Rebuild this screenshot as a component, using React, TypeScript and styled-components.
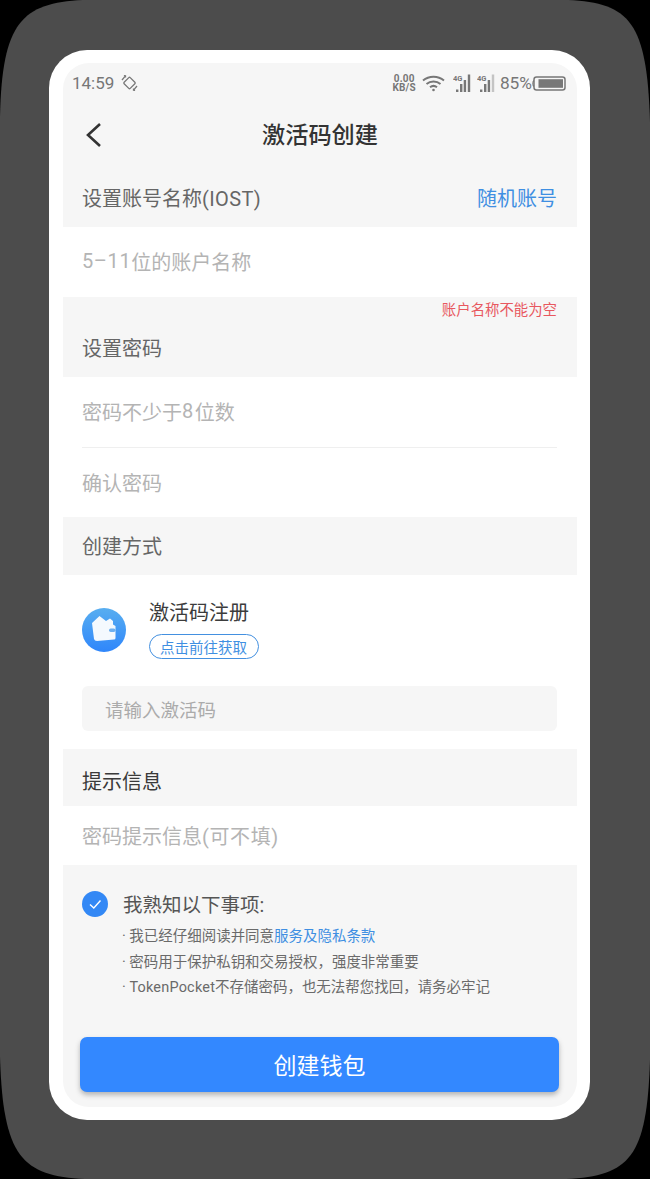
import React from 'react';
import styled, {createGlobalStyle} from "styled-components";

const GlobalStyle = createGlobalStyle`
  html, body {
    margin: 0;
    padding: 0;
    background: #000;
  }
  body {
    font-family: Roboto, "Noto Sans CJK SC", sans-serif;
  }
`

const Backdrop = styled.div`
  box-sizing: border-box;
  width: 650px;
  height: 1179px;
  padding: 50px 60px 59px 49px;
  background: #4c4c4c;
  clip-path: path("M83 0 L568 0 C630 3 647 22 650 122 L650 1060 C647 1157 630 1176 566 1179 L85 1179 C22 1176 3 1157 0 1057 L0 117 C2 22 22 3 83 0 Z");
`

const Phone = styled.div`
  box-sizing: border-box;
  height: 1070px;
  padding: 13px 13px 13px 14px;
  background: #fff;
  border-radius: 38px;
`

const Screen = styled.div`
  height: 1044px;
  display: flex;
  flex-direction: column;
  background: #f6f6f6;
  border-radius: 26px;
  overflow: hidden;
`

const StatusBar = styled.div`
  height: 40px;
  padding: 0 11px 0 9px;
  display: flex;
  align-items: center;
  justify-content: space-between;
  color: #777;
`

const StatusGroup = styled.div`
  display: flex;
  align-items: center;
  height: 20px;
`

const Clock = styled.span`
  font-size: 17px;
  margin-right: 7px;
`

const NetSpeed = styled.span`
  display: flex;
  flex-direction: column;
  align-items: center;
  font-size: 10px;
  font-weight: 700;
  line-height: 9px;
  letter-spacing: 0.2px;
  margin-right: 6px;
`

const BatteryText = styled.span`
  font-size: 17.3px;
  margin-left: 5px;
`

const NavBar = styled.div`
  box-sizing: border-box;
  height: 67px;
  padding: 0 0 7px 22px;
  display: flex;
  align-items: center;
  position: relative;
`

const NavTitle = styled.h1`
  position: absolute;
  left: 0;
  right: 0;
  margin: 0;
  text-align: center;
  font-size: 23.2px;
  font-weight: 500;
  color: #333;
`

const BackButton = styled.span`
  display: flex;
  margin-top: 4px;
`

const SectionHeader = styled.div<{$height: number; $shift: number; $dark?: boolean}>`
  box-sizing: border-box;
  height: ${p => p.$height}px;
  padding: ${p => Math.max(p.$shift, 0) * 2}px 20px ${p => Math.max(-p.$shift, 0) * 2}px 19px;
  display: flex;
  align-items: center;
  justify-content: space-between;
  font-size: 20px;
  color: ${p => p.$dark ? "#3a3a3a" : "#666"};
`

const RandomLink = styled.span`
  color: #3f8fe2;
`

const Spaced = styled.span<{$gap: number}>`
  letter-spacing: ${p => p.$gap}px;
`

const ErrorHeader = styled.div`
  height: 80px;
  padding: 0 20px 0 19px;
  display: flex;
  flex-direction: column;
  font-size: 20px;
  color: #666;
`

const ErrorText = styled.div`
  align-self: flex-end;
  height: 28px;
  line-height: 27px;
  font-size: 14.4px;
  color: #e8585f;
`

const HeaderLabel = styled.div`
  line-height: 48px;
`

const WhitePanel = styled.div`
  background: #fff;
`

const Field = styled.div<{$height: number; $divider?: boolean; $lift?: boolean}>`
  box-sizing: border-box;
  height: ${p => p.$height}px;
  margin: 0 20px 0 19px;
  padding-bottom: ${p => p.$lift ? 2 : 0}px;
  display: flex;
  align-items: center;
  font-size: 20px;
  color: #b4b4b4;
  border-bottom: ${p => p.$divider ? "1px solid #efefef" : "none"};
`

const Method = styled.div`
  box-sizing: border-box;
  height: 111px;
  padding: 0 0 1px 19px;
  display: flex;
  align-items: center;
  gap: 23px;
`

const MethodText = styled.div`
  display: flex;
  flex-direction: column;
  align-items: flex-start;
  gap: 7px;
  margin-top: -2px;
`

const MethodName = styled.div`
  font-size: 20px;
  line-height: 27px;
  color: #3c3c3c;
`

const Pill = styled.div`
  box-sizing: border-box;
  width: 110px;
  height: 25px;
  padding-right: 1px;
  border: 1.7px solid #4390e0;
  border-radius: 13px;
  display: flex;
  align-items: center;
  justify-content: center;
  font-size: 14.5px;
  color: #3f8fe2;
`

const CodeInput = styled.div`
  box-sizing: border-box;
  height: 45px;
  margin: 0 20px 18px 19px;
  padding-left: 23px;
  display: flex;
  align-items: center;
  background: #f6f6f6;
  border-radius: 6px;
  font-size: 18.5px;
  color: #ababab;
`

const Notice = styled.div`
  flex: 1;
  padding: 26px 18px 0 19px;
  display: flex;
  flex-direction: column;
`

const NoticeHead = styled.div`
  display: flex;
  align-items: center;
  gap: 15px;
  height: 26px;
  font-size: 19.5px;
  color: #555;
`

const NoticeTitle = styled.span`
  margin-top: -2px;
`

const Terms = styled.ul`
  list-style: none;
  margin: 7px 0 36.5px 40px;
  padding: 0;
  font-size: 14.47px;
  line-height: 25.5px;
  color: #6a6a6a;
`

const TermLink = styled.span`
  color: #3f8fe2;
`

const SubmitButton = styled.button`
  height: 55px;
  margin-left: -2px;
  margin-right: 0;
  padding: 0 0 2px;
  border: none;
  border-radius: 7px;
  background: #3388ff;
  box-shadow: 0 3px 5px rgba(60, 60, 60, 0.35);
  font-family: inherit;
  font-size: 23px;
  color: #fff;
`

const SignalWrap = styled.span<{$left: number}>`
  display: flex;
  margin-left: ${p => p.$left}px;
`

const RotateIcon = () => (
    <svg width="17" height="18" viewBox="0 0 17 18" fill="none" stroke="#777" strokeWidth="1.3">
        <rect x="4.200" y="4.700" width="8.600" height="8.600" rx="1" transform="rotate(45 8.500 9)"/>
        <path d="M1 6 L4.500 1.800 M2.900 1.600 L4.500 1.800 L4.500 3.400 M16 12 L12.500 16.200 M14.100 16.400 L12.500 16.200 L12.500 14.600"/>
    </svg>
)

const WifiIcon = () => (
    <svg width="23" height="17" viewBox="0 0 23 17" fill="none" stroke="#777" strokeWidth="2">
        <path d="M1 5.500C7 .5 16 .5 22 5.500"/>
        <path d="M4.500 9C8.500 5.600 14.500 5.600 18.500 9"/>
        <path d="M8 12.300C10 10.700 13 10.700 15 12.300"/>
        <circle cx="11.500" cy="15" r="1.300" fill="#777" stroke="none"/>
    </svg>
)

const SignalIcon = ({last}: {last: string}) => (
    <svg width="18" height="19" viewBox="0 0 18 19">
        <text x="0" y="6.500" fontSize="7.500" fontWeight="700" fontFamily="Roboto" fill="#777">4G</text>
        <rect x="3" y="15.500" width="2.400" height="2.500" fill="#777"/>
        <rect x="7" y="10" width="2.400" height="8" fill="#777"/>
        <rect x="10.700" y="6" width="2.400" height="12" fill="#777"/>
        <rect x="14.800" y="0.500" width="2.400" height="17.500" fill={last}/>
    </svg>
)

const BatteryIcon = () => (
    <svg width="34" height="15" viewBox="0 0 34 15" fill="none">
        <path d="M2 4.500C.5 5.500 .5 9.500 2 10.500" stroke="#777" strokeWidth="1.200"/>
        <rect x="2" y="1" width="31" height="13" rx="2.500" stroke="#777" strokeWidth="1.500"/>
        <rect x="6.500" y="3.200" width="24.500" height="8.600" fill="#777"/>
    </svg>
)

const BackIcon = () => (
    <svg width="17" height="26" viewBox="0 0 17 26" fill="none" stroke="#333" strokeWidth="2.600">
        <path d="M15 2 L3 13 L15 24"/>
    </svg>
)

const WalletIcon = () => (
    <svg width="44" height="44" viewBox="0 0 44 44">
        <defs>
            <linearGradient id="walletBg" x1="0" y1="0" x2="0" y2="1">
                <stop offset="0" stopColor="#58aef0"/>
                <stop offset="1" stopColor="#2f86fb"/>
            </linearGradient>
        </defs>
        <circle cx="22" cy="22" r="22" fill="url(#walletBg)"/>
        <path d="M10 15 L17.500 8 L24 13 L28 10.500 L31 13 L31 16.500 L33.500 18 V30 Q33.500 31.500 32 31.500 L15 33 Q12.500 33 12 31 Z" fill="#f4f9fe"/>
        <rect x="27" y="20.500" width="6.500" height="3.500" rx="1.700" fill="#6fb0f0"/>
    </svg>
)

const CheckIcon = () => (
    <svg width="26" height="26" viewBox="0 0 26 26" style={{flexShrink: 0}}>
        <circle cx="13" cy="13" r="13" fill="#3388f5"/>
        <path d="M8 13.500 L11.800 17 L18.500 9.500" fill="none" stroke="#fff" strokeWidth="1.400"/>
    </svg>
)

const App: React.FC = () => {
    return (
        <Backdrop>
            <GlobalStyle/>
            <Phone>
                <Screen>
                    <StatusBar>
                        <StatusGroup>
                            <Clock>14:59</Clock>
                            <RotateIcon/>
                        </StatusGroup>
                        <StatusGroup>
                            <NetSpeed><span>0.00</span><span>KB/S</span></NetSpeed>
                            <WifiIcon/>
                            <SignalWrap $left={8}><SignalIcon last="#777"/></SignalWrap>
                            <SignalWrap $left={6}><SignalIcon last="#c4c4c4"/></SignalWrap>
                            <BatteryText>85%</BatteryText>
                            <BatteryIcon/>
                        </StatusGroup>
                    </StatusBar>
                    <NavBar>
                        <BackButton><BackIcon/></BackButton>
                        <NavTitle>激活码创建</NavTitle>
                    </NavBar>
                    <SectionHeader $height={57} $shift={-1}>
                        <span>设置账号名称<Spaced $gap={0.4}>(IOST)</Spaced></span>
                        <RandomLink>随机账号</RandomLink>
                    </SectionHeader>
                    <WhitePanel>
                        <Field $height={70} $lift><Spaced $gap={0.6}>5–11</Spaced>位的账户名称</Field>
                    </WhitePanel>
                    <ErrorHeader>
                        <ErrorText>账户名称不能为空</ErrorText>
                        <HeaderLabel>设置密码</HeaderLabel>
                    </ErrorHeader>
                    <WhitePanel>
                        <Field $height={71} $divider $lift>密码不少于<Spaced $gap={1.5}>8</Spaced>位数</Field>
                        <Field $height={69}>确认密码</Field>
                    </WhitePanel>
                    <SectionHeader $height={58} $shift={-1}>创建方式</SectionHeader>
                    <WhitePanel>
                        <Method>
                            <WalletIcon/>
                            <MethodText>
                                <MethodName>激活码注册</MethodName>
                                <Pill>点击前往获取</Pill>
                            </MethodText>
                        </Method>
                        <CodeInput>请输入激活码</CodeInput>
                    </WhitePanel>
                    <SectionHeader $height={57} $shift={3} $dark>提示信息</SectionHeader>
                    <WhitePanel>
                        <Field $height={59}>密码提示信息<Spaced $gap={0.6}>(可不填)</Spaced></Field>
                    </WhitePanel>
                    <Notice>
                        <NoticeHead>
                            <CheckIcon/>
                            <NoticeTitle>我熟知以下事项:</NoticeTitle>
                        </NoticeHead>
                        <Terms>
                            <li>· 我已经仔细阅读并同意<TermLink>服务及隐私条款</TermLink></li>
                            <li>· 密码用于保护私钥和交易授权，强度非常重要</li>
                            <li>· <Spaced $gap={0.2}>TokenPocket</Spaced>不存储密码，也无法帮您找回，请务必牢记</li>
                        </Terms>
                        <SubmitButton>创建钱包</SubmitButton>
                    </Notice>
                </Screen>
            </Phone>
        </Backdrop>
    );
};

export default App;
